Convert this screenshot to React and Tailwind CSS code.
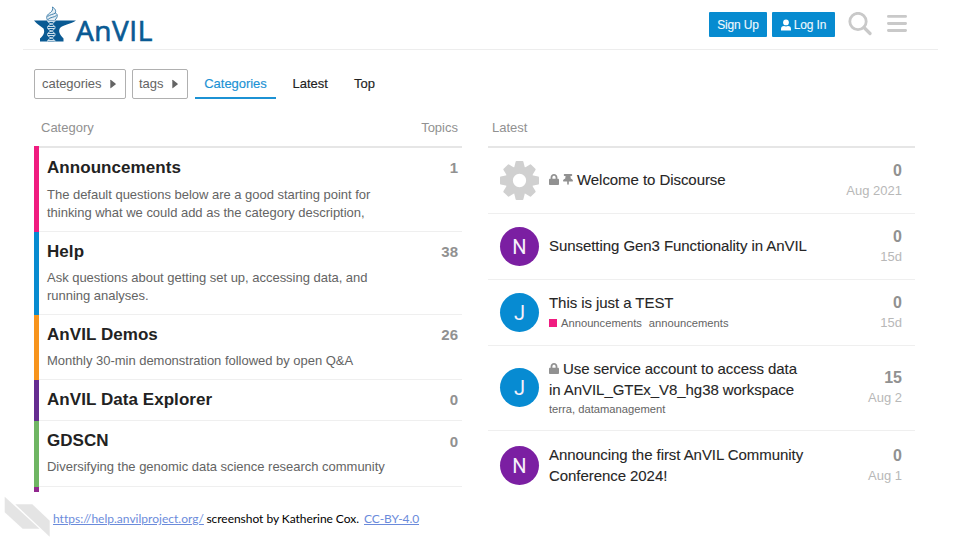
import React from "react";

const categories = [
  { name: "Announcements", count: 1, bar: "bg-[#f01c80]", height: "h-[86px]", pad: "pt-[10px]", countPad: "pt-px", gap: "pt-[8px]", lines: ["The default questions below are a good starting point for", "thinking what we could add as the category description,"] },
  { name: "Help", count: 38, bar: "bg-[#078bd0]", height: "h-[83px]", pad: "pt-[10px]", countPad: "pt-px", gap: "pt-[7px]", lines: ["Ask questions about getting set up, accessing data, and", "running analyses."] },
  { name: "AnVIL Demos", count: 26, bar: "bg-[#f7941d]", height: "h-[65px]", pad: "pt-[10px]", countPad: "pt-px", gap: "pt-[7px]", lines: ["Monthly 30-min demonstration followed by open Q&A"] },
  { name: "AnVIL Data Explorer", count: 0, bar: "bg-[#652d90]", height: "h-[41px]", pad: "pt-[10px]", countPad: "pt-px", gap: "pt-[7px]", lines: [] },
  { name: "GDSCN", count: 0, bar: "bg-[#6fb563]", height: "h-[66px]", pad: "pt-[10px]", countPad: "pt-[2px]", gap: "pt-[7px]", lines: ["Diversifying the genomic data science research community"] },
];

const topics = [
  { avatar: "gear", locked: true, pinned: true, title: ["Welcome to Discourse"], count: 0, date: "Aug 2021", height: "h-[66px]" },
  { avatar: "N", title: ["Sunsetting Gen3 Functionality in AnVIL"], count: 0, date: "15d", height: "h-[66px]" },
  { avatar: "J", title: ["This is just a TEST"], category: "Announcements", tags: "announcements", count: 0, date: "15d", height: "h-[66px]" },
  { avatar: "J", locked: true, title: ["Use service account to access data", "in AnVIL_GTEx_V8_hg38 workspace"], tags: "terra, datamanagement", count: 15, date: "Aug 2", height: "h-[85px]" },
  { avatar: "N", title: ["Announcing the first AnVIL Community", "Conference 2024!"], count: 0, date: "Aug 1", height: "h-[70px]" },
];

function AnvilMark() {
  return (
    <svg width="43" height="37" viewBox="0 0 43 37" className="block">
      <path d="M0 14.500H42C37 18 30 18.500 26.500 21.500C24 24 25 28 29.500 32.500V35.500H6V32.500C10 29 11 26 9.500 22.500C6.500 20 3 18.500 0 14.500Z" fill="#0a5a93" />
      <path d="M13.500 14C11.500 10.500 13.500 8.500 16.500 6.500C18.500 5 19 3 18.500 1C21.500 3 22.200 5 21.300 7C24 8 24 11 21 14Z" fill="#e6eff5" />
      <path d="M13.500 14C11.500 10.500 13.500 8.500 16.500 6.500C18.500 5 19 3 18.500 1C21.500 3 22.200 5 21.300 7C24 8 24 11 21 14M13.500 10.500C16 8.500 19.500 8.500 21.300 7M14 13.500C16 11 20.500 11.500 22.500 9.500" fill="none" stroke="#2f74a4" strokeWidth="0.900" />
      <path d="M13.500 14.500C13.500 18 21 18 21 21.500C21 25 13.500 25 13.500 28.500C13.500 32 21 32 21 35.500M21 14.500C21 18 13.500 18 13.500 21.500C13.500 25 21 25 21 28.500C21 32 13.500 32 13.500 35.500M14 15.500H20.500M14 20.500H20.500M14 22.500H20.500M14 27.500H20.500M14 29.500H20.500M14 34.500H20.500" fill="none" stroke="#e3eef5" strokeWidth="0.900" />
    </svg>
  );
}

function Lock() {
  return (
    <svg width="10" height="11" viewBox="0 0 448 512" preserveAspectRatio="none" className="mr-1 inline-block align-[0px]" fill="#919191">
      <path d="M400 224h-24v-72C376 68.200 307.800 0 224 0S72 68.200 72 152v72H48c-26.500 0-48 21.500-48 48v192c0 26.500 21.500 48 48 48h352c26.500 0 48-21.500 48-48V272c0-26.500-21.500-48-48-48zm-104 0H152v-72c0-39.700 32.300-72 72-72s72 32.300 72 72v72z" />
    </svg>
  );
}

function Pin() {
  return (
    <svg width="10" height="11" viewBox="0 0 384 512" preserveAspectRatio="none" className="mr-1 inline-block align-[0px]" fill="#919191">
      <path d="M298 214.300L285.800 96H328c13.300 0 24-10.700 24-24V24c0-13.300-10.700-24-24-24H56C42.700 0 32 10.700 32 24v48c0 13.300 10.700 24 24 24h42.200L86 214.300C37.500 236.800 0 277.300 0 328c0 13.300 10.700 24 24 24h136v104c0 1.200.300 2.500.800 3.600l24 48c3 5.900 11.400 5.900 14.300 0l24-48c.600-1.100.800-2.300.800-3.600V352h136c13.300 0 24-10.700 24-24 0-51.200-38-91.400-86-113.700z" />
    </svg>
  );
}

function Avatar({ kind }) {
  if (kind === "gear") {
    return (
      <svg width="39" height="39" viewBox="-20 -20 40 40" className="block shrink-0">
        <g fill="#d0d0d0">
          <path fillRule="evenodd" d="M0-14.500A14.500 14.500 0 1 0 0 14.500A14.500 14.500 0 1 0 0-14.500ZM0-6.800A6.800 6.800 0 1 1 0 6.800A6.800 6.800 0 1 1 0-6.800Z" />
          {[0, 45, 90, 135, 180, 225, 270, 315].map((a) => (
            <path key={a} transform={`rotate(${a})`} d="M-5.500-13L-4-19.200Q-3.800-20-3-20H3Q3.800-20 4-19.200L5.500-13Z" />
          ))}
        </g>
      </svg>
    );
  }
  return (
    <div className={`flex size-[39px] shrink-0 items-center justify-center rounded-full pt-px font-[Roboto,sans-serif] text-[20px] leading-none text-[#f6f0fa] ${kind === "N" ? "bg-[#7b1fa2]" : "bg-[#078bd2]"}`}>
      {kind}
    </div>
  );
}

function Caret() {
  return (
    <svg width="6" height="10" viewBox="0 0 6 10" fill="#646464">
      <path d="M0.300 1.200V8.800Q0.300 9.500 1 9L5.500 5.400Q6 5 5.500 4.600L1 1Q0.300 0.500 0.300 1.200Z" />
    </svg>
  );
}

export default function App() {
  return (
    <div className="h-[540px] w-[960px] overflow-hidden bg-white font-['Liberation_Sans',Arial,sans-serif] text-[#222]">
      <header className="ml-[23px] flex h-[50px] w-[915px] border-b border-[#ededed] pl-[11px]">
        <div className="pt-[5.500px]"><AnvilMark /></div>
        <div className="-ml-[1px] w-[90px] pt-[11px] font-['Open_Sans',sans-serif] text-[28px] font-medium leading-[38px] tracking-[0.600px] text-[#0a5a93] [-webkit-text-stroke:0.700px_#0a5a93]">AnVIL</div>
        <div className="ml-auto flex pr-[31px] pt-[12px]">
          <button className="h-[25px] w-[58px] rounded-[1px] bg-[#078bd0] text-[12px] tracking-[-0.150px] text-[#f0f9fe] [-webkit-text-stroke:0.1px_#f0f9fe]">Sign Up</button>
          <button className="ml-[5px] flex h-[25px] w-[63px] items-center justify-center gap-[3px] rounded-[1px] bg-[#078bd0] text-[12px] tracking-[-0.150px] text-[#f0f9fe] [-webkit-text-stroke:0.1px_#f0f9fe]">
            <svg width="10" height="12" viewBox="0 0 10 12" fill="#fff"><circle cx="5" cy="3.400" r="2.900" /><path d="M0 11.500V10Q0 7.200 3 7L5 7.600L7 7Q10 7.200 10 10V11.500Z" /></svg>
            Log In
          </button>
          <svg width="24" height="24" viewBox="0 0 24 24" className="ml-[13px]" fill="none" stroke="#c9c9c9"><circle cx="10" cy="9.500" r="8.200" strokeWidth="2.800" /><path d="M16 15.500L22 21.500" strokeWidth="3.200" strokeLinecap="round" /></svg>
          <svg width="20" height="20" viewBox="0 0 20 20" className="ml-[15px] mt-[1px]" fill="none" stroke="#c9c9c9" strokeWidth="2.800" strokeLinecap="round"><path d="M1.400 3.400H18.600M1.400 10.500H18.600M1.400 17.500H18.600" /></svg>
        </div>
      </header>

      <nav className="ml-[34px] mt-[19px] flex h-[30px] text-[13px]">
        <div className="flex w-[92px] items-center justify-between rounded-[2px] border border-[#b0b0b0] pl-[7px] pr-[9px] tracking-[-0.050px] text-[#646464]">categories <Caret /></div>
        <div className="ml-[6px] flex w-[56px] items-center justify-between rounded-[2px] border border-[#b0b0b0] pl-[6px] pr-[9px] text-[#646464]">tags <Caret /></div>
        <div className="ml-[7px] flex w-[81px] items-center justify-center border-b-2 border-[#1c92d4] pt-[2px] tracking-[-0.040px] text-[#1c92d4] [-webkit-text-stroke:0.150px_#1c92d4]">Categories</div>
        <div className="ml-[16.500px] flex items-center [-webkit-text-stroke:0.150px_#222]">Latest</div>
        <div className="ml-[26px] flex items-center [-webkit-text-stroke:0.150px_#222]">Top</div>
      </nav>

      <main className="ml-[34px] mt-px flex h-[392px] overflow-hidden">
        <section className="w-[428px]">
          <div className="flex h-[46px] justify-between pl-[7px] pr-[4px] pt-[20px] text-[13px] leading-[16px] text-[#919191]"><span>Category</span><span>Topics</span></div>
          <div className="flex h-[2px]"><div className="w-[5px] bg-[#f01c80]" /><div className="h-[2px] flex-1 bg-[#e6e6e6]" /></div>
          <div className="-mt-[2px]">
            {categories.map((c) => (
              <div key={c.name} className={`flex ${c.height}`}>
                <div className={`w-[5px] ${c.bar}`} />
                <div className={`flex flex-1 border-b border-[#efefef] pl-[8px] pr-[4px] ${c.pad} ${c.name === "Announcements" ? "border-t-2 border-t-[#e6e6e6]" : ""}`}>
                  <div className="flex-1 whitespace-nowrap">
                    <h3 className="text-[17px] font-bold leading-[20px] tracking-[0.060px]">{c.name}</h3>
                    <div className={`text-[13px] leading-[18px] tracking-[-0.020px] text-[#646464] ${c.gap}`}>{c.lines.map((l) => <p key={l}>{l}</p>)}</div>
                  </div>
                  <div className={`text-[15px] font-bold leading-[18px] text-[#919191] ${c.countPad}`}>{c.count}</div>
                </div>
              </div>
            ))}
            <div className="h-[6px] w-[5px] bg-[#92278f]" />
          </div>
        </section>

        <section className="ml-[26px] w-[427px]">
          <div className="h-[46px] pl-[4px] pt-[20px] text-[13px] leading-[16px] text-[#919191]">Latest</div>
          <div className="h-[2px] bg-[#e6e6e6]" />
          <div>
            {topics.map((t, i) => (
              <div key={t.title[0]} className={`flex items-center pl-[12px] pr-[13px] ${t.height} ${i < 4 ? "border-b border-[#efefef]" : ""}`}>
                <div className={i > 2 ? "pb-[2px]" : ""}><Avatar kind={t.avatar} /></div>
                <div className={`ml-[10px] flex-1 whitespace-nowrap ${t.tags ? "" : "pb-[2px]"}`}>
                  <div className="text-[15px] leading-[21px] tracking-[-0.060px] text-[#262626] [-webkit-text-stroke:0.100px_#262626]">
                    {t.title.map((l, k) => (
                      <div key={l}>{k === 0 && t.locked && <Lock />}{k === 0 && t.pinned && <Pin />}{l}</div>
                    ))}
                  </div>
                  {t.tags && (
                    <div className={`flex items-center text-[11.200px] text-[#646464] ${t.category ? "h-[20px]" : "h-[19px]"}`}>
                      {t.category && <><span className="mr-[4px] size-[8px] bg-[#f01c80]" /><span className="mr-[7px]">{t.category}</span></>}
                      <span>{t.tags}</span>
                    </div>
                  )}
                </div>
                <div className="text-right">
                  <div className="text-[16px] font-bold leading-[20px] text-[#919191]">{t.count}</div>
                  <div className="text-[13px] leading-[20px] text-[#b8b8b8]">{t.date}</div>
                </div>
              </div>
            ))}
          </div>
        </section>
      </main>

      <footer className="flex h-[48px] pl-[4px] font-[Lato,sans-serif] text-[12px] text-black">
        <svg width="46" height="45" viewBox="4 495 46 45" className="mt-[3px] block" fill="#e4e4e4">
          <path d="M4.700 496.700V512.300L22.700 528.700H39.500Z" />
          <path d="M15.300 504.300H32.300L49.700 520.700V536.700Z" />
        </svg>
        <p className="ml-[3px] whitespace-pre pt-[18px] leading-[18px] tracking-[-0.040px]"><a className="tracking-[0.010px] text-[#6b8bdb] underline">https://help.anvilproject.org/</a><span className="-ml-[0.500px]"> screenshot by Katherine Cox.  </span><a className="-ml-[1px] tracking-[-0.080px] text-[#6b8bdb] underline">CC-BY-4.0</a></p>
      </footer>
    </div>
  );
}
